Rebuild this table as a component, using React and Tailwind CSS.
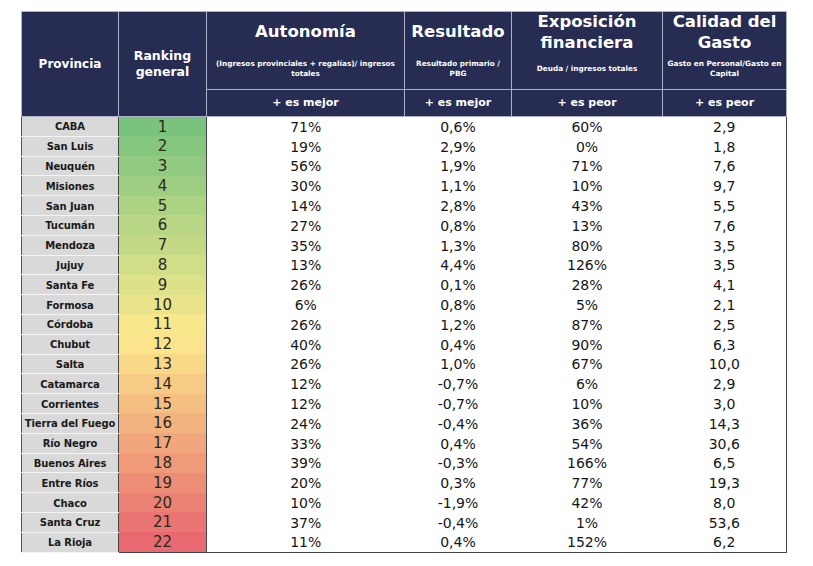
import React from "react";

const rows = [
  ["CABA", "71%", "0,6%", "60%", "2,9"],
  ["San Luis", "19%", "2,9%", "0%", "1,8"],
  ["Neuquén", "56%", "1,9%", "71%", "7,6"],
  ["Misiones", "30%", "1,1%", "10%", "9,7"],
  ["San Juan", "14%", "2,8%", "43%", "5,5"],
  ["Tucumán", "27%", "0,8%", "13%", "7,6"],
  ["Mendoza", "35%", "1,3%", "80%", "3,5"],
  ["Jujuy", "13%", "4,4%", "126%", "3,5"],
  ["Santa Fe", "26%", "0,1%", "28%", "4,1"],
  ["Formosa", "6%", "0,8%", "5%", "2,1"],
  ["Córdoba", "26%", "1,2%", "87%", "2,5"],
  ["Chubut", "40%", "0,4%", "90%", "6,3"],
  ["Salta", "26%", "1,0%", "67%", "10,0"],
  ["Catamarca", "12%", "-0,7%", "6%", "2,9"],
  ["Corrientes", "12%", "-0,7%", "10%", "3,0"],
  ["Tierra del Fuego", "24%", "-0,4%", "36%", "14,3"],
  ["Río Negro", "33%", "0,4%", "54%", "30,6"],
  ["Buenos Aires", "39%", "-0,3%", "166%", "6,5"],
  ["Entre Ríos", "20%", "0,3%", "77%", "19,3"],
  ["Chaco", "10%", "-1,9%", "42%", "8,0"],
  ["Santa Cruz", "37%", "-0,4%", "1%", "53,6"],
  ["La Rioja", "11%", "0,4%", "152%", "6,2"],
];

// excel style 3-colour scale: green -> yellow -> red
const mix = (a, b, t) => a.map((v, i) => Math.round(v + (b[i] - v) * t));
const rankColor = (i) => {
  const green = [122, 195, 126];
  const yellow = [252, 234, 140];
  const red = [232, 105, 111];
  const t = i / 21;
  const c = t < 0.5 ? mix(green, yellow, t * 2) : mix(yellow, red, (t - 0.5) * 2);
  return `rgb(${c[0]}, ${c[1]}, ${c[2]})`;
};

const Head = ({ title, sub }) => (
  <th className="border border-[#aeb2c8] bg-[#272c52] p-0 align-top font-bold text-white">
    <div className="flex h-[77px] flex-col px-1">
      <div className="flex h-[39px] items-center justify-center text-[16.5px] leading-[21px]">{title}</div>
      <div className="flex flex-1 items-center justify-center pb-[2px] text-[7.3px] leading-[10px]">{sub}</div>
    </div>
  </th>
);

export default function App() {
  return (
    <div className="min-h-[566px] w-[813px] bg-white pl-[21px] pt-[11px] font-['DejaVu_Sans',sans-serif]">
      <table className="table-fixed border-collapse">
        <colgroup>
          <col className="w-[97px]" />
          <col className="w-[88px]" />
          <col className="w-[198px]" />
          <col className="w-[107px]" />
          <col className="w-[151px]" />
          <col className="w-[124px]" />
        </colgroup>
        <thead>
          <tr>
            <th rowSpan={2} className="border border-[#aeb2c8] bg-[#272c52] text-[12px] font-bold text-white">
              Provincia
            </th>
            <th rowSpan={2} className="border border-[#aeb2c8] bg-[#272c52] text-[12.5px] leading-[16px] font-bold text-white">
              Ranking
              <br />
              general
            </th>
            <Head title="Autonomía" sub="(Ingresos provinciales + regalías)/ ingresos totales" />
            <Head title="Resultado" sub="Resultado primario / PBG" />
            <Head title={<>Exposición<br />financiera</>} sub="Deuda / ingresos totales" />
            <Head title={<>Calidad del<br />Gasto</>} sub="Gasto en Personal/Gasto en Capital" />
          </tr>
          <tr className="h-[27px]">
            {["+ es mejor", "+ es mejor", "+ es peor", "+ es peor"].map((t, i) => (
              <th key={i} className="border border-[#aeb2c8] bg-[#272c52] pt-[1px] text-[11px] font-bold text-white">
                {t}
              </th>
            ))}
          </tr>
        </thead>
        <tbody>
          {rows.map((r, i) => (
            <tr key={r[0]} className="h-[19.8px]">
              <td className="whitespace-nowrap border-b border-l border-b-[#f4f4f4] border-l-[#555] bg-[#d9d9d9] p-0 pt-[1px] text-center text-[10px] font-bold tracking-[-0.1px] text-[#1a1a1a]">
                {r[0]}
              </td>
              <td
                className="border-x border-x-[#444] p-0 pt-[1px] text-center text-[15px] leading-none text-[#2a2a1a]"
                style={{ backgroundColor: rankColor(i) }}
              >
                {i + 1}
              </td>
              {r.slice(1).map((v, j) => (
                <td
                  key={j}
                  className={`p-0 pt-[1px] text-center text-[14px] leading-none text-[#151515] ${j === 3 ? "border-r border-r-[#444]" : ""}`}
                >
                  {v}
                </td>
              ))}
            </tr>
          ))}
          <tr>
            <td colSpan={6} className="h-0 border-t border-t-[#444] p-0" />
          </tr>
        </tbody>
      </table>
    </div>
  );
}
